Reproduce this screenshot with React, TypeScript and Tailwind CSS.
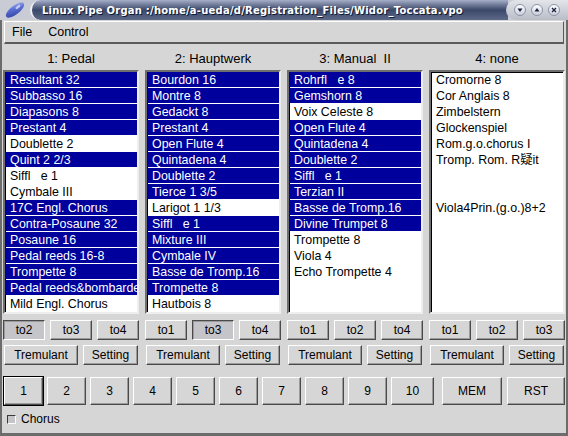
import React from "react";

type Stop = { name: string; on: boolean };
type Coupler = { label: string; down?: boolean };

const on = (name: string): Stop => ({ name, on: true });
const off = (name: string): Stop => ({ name, on: false });

const columns: { title: string; stops: Stop[]; couplers: Coupler[] }[] = [
  {
    title: "1: Pedal",
    stops: [
      on("Resultant 32"),
      on("Subbasso 16"),
      on("Diapasons 8"),
      on("Prestant 4"),
      off("Doublette 2"),
      on("Quint 2 2/3"),
      off("Siffl\u00a0\u00a0\u00a0e 1"),
      off("Cymbale III"),
      on("17C Engl. Chorus"),
      on("Contra-Posaune 32"),
      on("Posaune 16"),
      on("Pedal reeds 16-8"),
      on("Trompette 8"),
      on("Pedal reeds&bombarde"),
      off("Mild Engl. Chorus"),
    ],
    couplers: [{ label: "to2", down: true }, { label: "to3" }, { label: "to4" }],
  },
  {
    title: "2: Hauptwerk",
    stops: [
      on("Bourdon 16"),
      on("Montre 8"),
      on("Gedackt 8"),
      on("Prestant 4"),
      on("Open Flute 4"),
      on("Quintadena 4"),
      on("Doublette 2"),
      on("Tierce 1 3/5"),
      off("Larigot 1 1/3"),
      on("Siffl\u00a0\u00a0\u00a0e 1"),
      on("Mixture III"),
      on("Cymbale IV"),
      on("Basse de Tromp.16"),
      on("Trompette 8"),
      off("Hautbois 8"),
    ],
    couplers: [{ label: "to1" }, { label: "to3", down: true }, { label: "to4" }],
  },
  {
    title: "3: Manual  II",
    stops: [
      on("Rohrfl\u00a0\u00a0\u00a0e 8"),
      on("Gemshorn 8"),
      off("Voix Celeste 8"),
      on("Open Flute 4"),
      on("Quintadena 4"),
      on("Doublette 2"),
      on("Siffl\u00a0\u00a0\u00a0e 1"),
      on("Terzian II"),
      on("Basse de Tromp.16"),
      on("Divine Trumpet 8"),
      off("Trompette 8"),
      off("Viola 4"),
      off("Echo Trompette 4"),
    ],
    couplers: [{ label: "to1" }, { label: "to2" }, { label: "to4" }],
  },
  {
    title: "4: none",
    stops: [
      off("Cromorne 8"),
      off("Cor Anglais 8"),
      off("Zimbelstern"),
      off("Glockenspiel"),
      off("Rom.g.o.chorus I"),
      off("Tromp. Rom. R疑it"),
      off(""),
      off(""),
      off("Viola4Prin.(g.o.)8+2"),
    ],
    couplers: [{ label: "to1" }, { label: "to2" }, { label: "to3" }],
  },
];

const raised =
  "border border-white border-r-[#4a4a4a] border-b-[#4a4a4a] shadow-[inset_-1px_-1px_0_#9a9a9a] bg-[#d6d6d6]";
const sunken =
  "border border-[#4a4a4a] border-r-white border-b-white shadow-[inset_1px_1px_0_#9a9a9a] bg-[#c4c4c9]";

function Btn({ label, down, className = "" }: { label: string; down?: boolean; className?: string }) {
  return (
    <div className={`flex items-center justify-center text-[12px] ${down ? sunken : raised} ${className}`}>
      {label}
    </div>
  );
}

function StopRow({ stop }: { stop: Stop }) {
  return (
    <div className="h-[16px] pb-px">
      <div
        className={`h-[15px] pl-[5px] leading-[16px] whitespace-pre overflow-hidden ${
          stop.on ? "bg-[#00009c] text-white" : "text-black"
        }`}
      >
        {stop.name}
      </div>
    </div>
  );
}

function TitleBar() {
  return (
    <div className="h-[20px] flex bg-[#c9ccd4] overflow-hidden">
      <div className="w-[30px] flex items-center justify-center">
        <svg width="26" height="18" viewBox="0 0 26 18">
          <defs>
            <linearGradient id="gem" x1="0" y1="1" x2="1" y2="0">
              <stop offset="0" stopColor="#2b3c9c" />
              <stop offset="0.6" stopColor="#5d72d6" />
              <stop offset="1" stopColor="#b7c3f0" />
            </linearGradient>
          </defs>
          <ellipse cx="13" cy="9" rx="11" ry="4.5" transform="rotate(-38 13 9)" fill="url(#gem)" />
          <ellipse cx="16" cy="6" rx="3" ry="1.2" transform="rotate(-38 16 6)" fill="#e6ebff" opacity="0.7" />
        </svg>
      </div>
      <div className="flex-1 flex items-center rounded-l-[10px] border-l-2 border-[#eef0f6] bg-gradient-to-b from-[#a6afc8] via-[#3c4869] to-[#5d6987] pl-[10px]">
        <span className="text-white font-bold text-[10px] tracking-[0.22px] whitespace-nowrap [font-family:'DejaVu_Sans',Verdana,sans-serif] [text-shadow:1px_1px_0_#111a30]">
          Linux Pipe Organ :/home/a-ueda/d/Registration_Files/Widor_Toccata.vpo
        </span>
      </div>
      <div className="w-[62px] -ml-[2px] rounded-l-[10px] bg-gradient-to-b from-[#e3e5ea] to-[#b9bdc7] flex items-center justify-end gap-[5px] pr-[8px]">
        {["down", "up", "close"].map((k) => (
          <div
            key={k}
            className="w-[12px] h-[12px] rounded-full bg-gradient-to-b from-white to-[#c9cedb] border border-[#8c93a6] flex items-center justify-center"
          >
            <svg width="8" height="8" viewBox="0 0 8 8">
              {k === "down" && <path d="M1.5 2.5 L6.5 2.5 L4 6 Z" fill="#1c2340" />}
              {k === "up" && <path d="M1.5 5.5 L6.5 5.5 L4 2 Z" fill="#1c2340" />}
              {k === "close" && (
                <path d="M2 2 L6 6 M6 2 L2 6" stroke="#1c2340" strokeWidth="1.3" />
              )}
            </svg>
          </div>
        ))}
      </div>
    </div>
  );
}

export default function App() {
  const numbers = ["1", "2", "3", "4", "5", "6", "7", "8", "9"];
  return (
    <div className="w-[568px] h-[436px] bg-[#d6d6d6] flex flex-col overflow-hidden text-black [font-family:'Liberation_Sans',Arial,'Noto_Sans_CJK_JP',sans-serif]">
      <TitleBar />
      <div className="flex-1 flex flex-col border-x-2 border-b-[3px] border-[#6c6c6c] px-px">
        {/* menu bar */}
        <div className="mt-px mx-px h-[23px] flex items-center gap-[16px] pl-[7px] text-[12.5px] border border-white border-r-[#5a5a5a] border-b-[#5a5a5a] border-b-2">
          <span>File</span>
          <span>Control</span>
        </div>

        <div className="grid grid-cols-[136px_136px_136px_136px] gap-x-[6px]">
          {columns.map((col) => (
            <div key={col.title} className="flex flex-col">
              <div className="h-[26px] flex items-center justify-center pt-[3px] text-[13px] whitespace-pre">
                {col.title}
              </div>
              <div className="h-[244px] bg-white border-2 border-[#6e6e6e] border-r-[#eeeeee] border-b-[#eeeeee] shadow-[inset_1px_1px_0_#000] text-[12.4px] overflow-hidden">
                {col.stops.map((st, i) => (
                  <StopRow key={i} stop={st} />
                ))}
              </div>
              <div className="mt-[6px] h-[20px] grid grid-cols-3 gap-[5px]">
                {col.couplers.map((c) => (
                  <Btn key={c.label} label={c.label} down={c.down} />
                ))}
              </div>
              <div className="mt-[5px] h-[20px] flex gap-[5px] pl-px">
                <Btn label="Tremulant" className="w-[74px]" />
                <Btn label="Setting" className="w-[55px]" />
              </div>
            </div>
          ))}
        </div>

        <div className="mt-[12px] h-[28px] flex ml-px">
          <div className="flex gap-[4px]">
            {numbers.map((n) => (
              <Btn
                key={n}
                label={n}
                className={`w-[39px] ${n === "1" ? "outline outline-1 outline-black" : ""}`}
              />
            ))}
            <Btn label="10" className="w-[43px]" />
          </div>
          <Btn label="MEM" className="w-[60px] ml-[8px]" />
          <Btn label="RST" className="w-[58px] ml-[5px]" />
        </div>

        <div className="flex-1 flex items-center pl-[4px] gap-[5px] text-[12px]">
          <div className="w-[9px] h-[9px] bg-[#c4c4c9] border border-[#3a3a3a] border-r-white border-b-white" />
          <span>Chorus</span>
        </div>
      </div>
    </div>
  );
}
